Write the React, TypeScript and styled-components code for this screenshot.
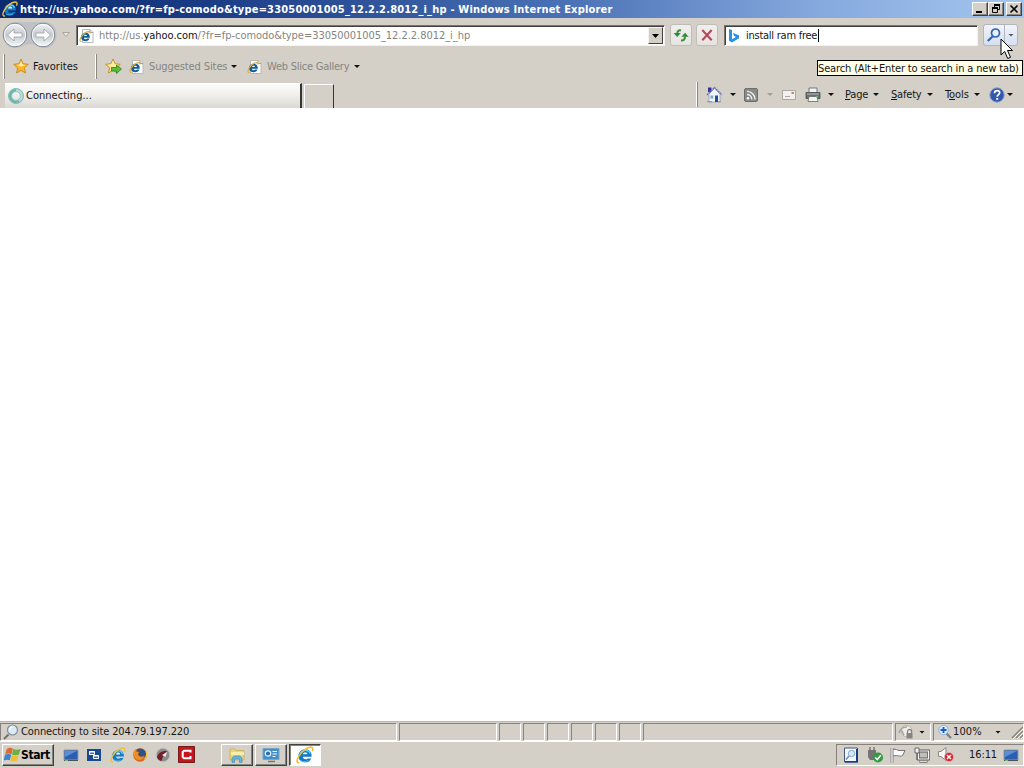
import type { ReactNode } from "react";
import styled, { createGlobalStyle, css } from "styled-components";

const GlobalStyle = createGlobalStyle`
  * {
    box-sizing: border-box;
  }

  body {
    margin: 0;
    overflow: hidden;
    background: #fff;
    font-family: "DejaVu Sans Condensed", "DejaVu Sans", sans-serif;
    font-stretch: condensed;
    font-size: 11px;
    color: #111;
  }

  svg {
    display: block;
    flex: none;
  }
`;

/* === small helpers === */

const Gap = styled.div<{ $w?: number }>`
  flex: ${({ $w }) => ($w === undefined ? "1 1 0" : `0 0 ${$w}px`)};
`;

const Label = styled.span<{ $w: number; $ls?: number; $muted?: boolean }>`
  flex: none;
  width: ${({ $w }) => $w}px;
  letter-spacing: ${({ $ls = -0.2 }) => $ls}px;
  color: ${({ $muted }) => ($muted ? "#858580" : "#151515")};
  white-space: pre;
  line-height: 14px;

  u {
    text-underline-offset: 1px;
  }

  b {
    font-weight: normal;
    color: #111;
  }
`;

const Caret = styled.i<{ $soft?: boolean }>`
  flex: none;
  width: 6px;
  height: 3px;
  background: ${({ $soft }) => ($soft ? "#a09e98" : "#111")};
  clip-path: polygon(0 0, 100% 0, 50% 100%);
`;

/* === window frame === */

const Screen = styled.div`
  display: flex;
  flex-direction: column;
  width: 1024px;
  height: 768px;
  background: #d4d0c8;
`;

const TitleBar = styled.header`
  display: flex;
  align-items: center;
  height: 18px;
  padding: 0 2px 0 2px;
  background: linear-gradient(90deg, #0c2a70 0%, #1a3c85 20%, #4a71b5 55%, #86a9de 80%, #a4c6ee 100%);
`;

const TitleText = styled.h1`
  flex: 1;
  margin: 0 0 0 2px;
  font-size: 11px;
  line-height: 17px;
  letter-spacing: 0.185px;
  color: #fff;
  white-space: pre;
`;

const WindowButton = styled.button`
  display: flex;
  align-items: center;
  justify-content: center;
  width: 16px;
  height: 14px;
  padding: 0;
  border: 1px solid;
  border-color: #fff #404040 #404040 #fff;
  background: #d4d0c8;
  box-shadow: inset -1px -1px #8a8780;

  &:last-child {
    margin-left: 2px;
  }
`;

/* === address row === */

const AddressRow = styled.div`
  display: flex;
  align-items: center;
  height: 34px;
  padding: 0 5px 0 2px;
`;

const field = css`
  display: flex;
  align-items: center;
  height: 21px;
  background: #fff;
  border: 1px solid;
  border-color: #77746e #f4f3ef #f4f3ef #77746e;
  box-shadow: inset 1px 1px #404040;
`;

const AddressField = styled.div`
  ${field}
  width: 589px;
  padding: 1px 1px 0 2px;
`;

const SearchField = styled.div`
  ${field}
  width: 254px;
  padding: 1px 0 0 3px;
`;

const TextCursor = styled.i`
  width: 1px;
  height: 13px;
  background: #000;
`;

const DropButton = styled.button`
  display: flex;
  align-items: center;
  justify-content: center;
  width: 15px;
  height: 17px;
  padding: 0;
  border: 1px solid;
  border-color: #f4f3ef #404040 #404040 #f4f3ef;
  background: #d4d0c8;
`;

const ToolButton = styled.button`
  display: flex;
  align-items: center;
  justify-content: center;
  width: 22px;
  height: 22px;
  padding: 0;
  border: 1px solid #c0bdb8;
  border-radius: 3px;
  background: linear-gradient(#f1efed, #e6e4e1);
`;

const SearchSplit = styled.div`
  display: flex;
  align-items: center;
  width: 35px;
  height: 22px;
  border: 1px solid #b0b5c2;
  border-radius: 3px;
  background: linear-gradient(#f2f4f9, #d5dff0);
  padding-left: 2px;

  &::after {
    content: "";
    order: 1;
    width: 1px;
    height: 20px;
    margin-left: 2px;
    background: #b0b5c2;
  }

  i {
    order: 2;
    margin-left: 3px;
    background: #4c5a70;
  }
`;

const Tooltip = styled.div`
  position: absolute;
  top: 60px;
  left: 817px;
  display: flex;
  align-items: center;
  width: 206px;
  height: 16px;
  padding-top: 1px;
  border: 1px solid #000;
  background: #fffee6;
`;

const Pointer = styled.svg`
  position: absolute;
  top: 38px;
  left: 1000px;
`;

/* === favorites row === */

const FavoritesRow = styled.div`
  display: flex;
  align-items: center;
  height: 29px;
  padding-left: 3px;
`;

const Grip = styled.i`
  flex: none;
  width: 2px;
  height: 25px;
  border-right: 1px solid #8b8882;
  background: #fff;
`;

/* === tabs and command bar === */

const TabRow = styled.div`
  display: flex;
  align-items: flex-end;
  height: 27px;
  padding-left: 5px;
`;

const Tab = styled.div`
  display: flex;
  align-items: center;
  width: 297px;
  height: 25px;
  padding: 0 0 0 3px;
  border-top: 1px solid #fff;
  border-right: 2px solid #353535;
  background: linear-gradient(#fcfcfa 0%, #f2f1ee 40%, #dcd9d3 100%);
`;

const NewTab = styled.div`
  width: 30px;
  height: 24px;
  margin-left: 2px;
  border: 1px solid #fff;
  border-right: 1px solid #353535;
  border-bottom: 0;
`;

const CommandBar = styled.div`
  display: flex;
  align-items: center;
  height: 27px;
  margin-left: auto;
  padding-right: 11px;
`;

const Page = styled.main`
  flex: 1;
  background: #fff;
`;

/* === status bar === */

const StatusBar = styled.div`
  display: flex;
  align-items: center;
  height: 20px;
  padding-top: 1px;
  gap: 2px;
  border-top: 1px solid #bab7b1;
`;

const StatusCell = styled.div<{ $w?: number }>`
  display: flex;
  align-items: center;
  flex: ${({ $w }) => ($w ? `0 0 ${$w}px` : "1 1 0")};
  height: 18px;
  border: 1px solid;
  border-color: #85827c #fff #fff #85827c;
`;

/* === taskbar === */

const TaskBar = styled.footer`
  display: flex;
  align-items: center;
  height: 27px;
  padding: 0 0 1px 2px;
  border-top: 1px solid #fff;
`;

const raised = css`
  border: 1px solid;
  border-color: #fff #404040 #404040 #fff;
  box-shadow: inset -1px -1px #86837d;
`;

const StartButton = styled.button`
  ${raised}
  display: flex;
  align-items: center;
  width: 52px;
  height: 22px;
  padding: 0 0 0 1px;
  background: #d4d0c8;
  font: bold 12px "DejaVu Sans Condensed", "DejaVu Sans", sans-serif;
  letter-spacing: -0.4px;
  color: #000;
`;

const TaskButton = styled.button<{ $active?: boolean }>`
  ${raised}
  display: flex;
  align-items: center;
  justify-content: center;
  width: 32px;
  height: 22px;
  margin-right: 2px;
  padding: 0;
  background: #d4d0c8;

  ${({ $active }) =>
    $active &&
    css`
      background: #fff;
      border-color: #404040 #fff #fff #404040;
      box-shadow: inset 1px 1px #86837d;
    `}
`;

const Tray = styled.div`
  display: flex;
  align-items: center;
  width: 188px;
  height: 22px;
  padding-left: 6px;
  border: 1px solid;
  border-color: #85827c #fff #fff #85827c;
`;

/* === icons === */

type IconProps = { w?: number; h?: number; box?: string; children: ReactNode };

const Icon = ({ w = 16, h = w, box = "0 0 16 16", children }: IconProps) => (
  <svg width={w} height={h} viewBox={box} fill="none">
    {children}
  </svg>
);

const IeMark = ({ size = 16 }: { size?: number }) => (
  <Icon w={size}>
    <path d="M13.500 11C12.500 13.200 10.700 14.500 8.300 14.500 4.700 14.500 2.200 12.100 2.200 8.800 2.200 5.400 4.900 2.900 8.200 2.900c3.600 0 5.900 2.500 5.700 6.700H6c.2 1.500 1.100 2.200 2.400 2.200.9 0 1.500-.3 1.900-.8z" fill="#1279c4" />
    <path d="M6.100 7.400C6.400 6.100 7.200 5.500 8.200 5.500s1.800.6 2 1.900z" fill="#e6f6ff" />
    <path d="M3.700 6.700C4.600 4.900 6.200 3.900 8.200 3.900c2.200 0 3.700 1 4.300 2.900" stroke="#6cccf2" strokeWidth="1.200" />
    <path d="M4 13c1.300 1 5 1.400 7-.2" stroke="#53bce9" strokeWidth=".8" />
    <path d="M3 14.800C.2 15.700.4 12.500 2.400 9.200 5 5 9.500 1.400 13 1c2.300-.2 2.400 1.700 1.500 3.700" stroke="#ecc03c" strokeWidth="1.400" />
  </Icon>
);

const IePage = () => (
  <Icon>
    <path d="M3.500 1.500h7.500l3 3v10h-10.500z" fill="#fff" stroke="#b7b8ba" />
    <path d="M11 1.500v3h3" fill="#dfe3e8" stroke="#a0a3a8" />
    <path d="M10.500 10.600c-.7 1.800-2 2.600-3.900 2.600-2.800 0-4.600-1.700-4.600-4.200s1.900-4.300 4.500-4.300c2.800 0 4.500 1.800 4.300 5H5c.1 1 .7 1.500 1.600 1.500.7 0 1.100-.2 1.400-.6z" fill="#125c99" />
    <path d="M5 8c.2-.9.8-1.300 1.500-1.300S7.800 7.100 8 8z" fill="#fff" />
    <path d="M3.200 7.500c.7-1.300 1.800-2 3.200-2" stroke="#3fb2de" strokeWidth="1.100" />
    <path d="M2.500 13.500C.3 14 .6 11.500 2.200 9 4 6.200 7.500 3.600 10 3.600c1.200.1 1.300 1 .9 2" stroke="#dcae3c" strokeWidth="1.100" />
  </Icon>
);

const Star = ({ add }: { add?: boolean }) => (
  <Icon w={17} h={17} box="0 0 17 17">
    <path d="M8 1l2.100 4.700 5.200.6-3.900 3.500 1.100 5.200L8 12.400 3.500 15l1.100-5.200L.7 6.300l5.200-.6z" fill={add ? "#f8e58c" : "#f9b52c"} stroke="#c78a22" strokeWidth=".9" />
    <path d="M8 3l1.400 3.500 3.600.4-4.800 1.700-5-1.700 3.500-.4z" fill="#fff0a8" />
    {add && <path d="M6.500 9.500h5V7l5 4-5 4.500V13h-5z" fill="#59bf35" stroke="#2e8425" strokeWidth=".8" />}
  </Icon>
);

const NavButtons = () => (
  <svg width="58" height="28" viewBox="0 0 58 28" fill="none">
    <defs>
      <linearGradient id="orb" x2="0" y2="1">
        <stop stopColor="#f1f3f5" />
        <stop offset=".5" stopColor="#c5cad0" />
        <stop offset="1" stopColor="#f7fbfc" />
      </linearGradient>
    </defs>
    <path d="M13 1h30c16 0 15 26 0 26-8 0-9-4-15-4s-8 4-15 4C-3 27-3 1 13 1z" fill="#bfc1c4" />
    {[13, 41].map((x) => (
      <g key={x}>
        <circle cx={x} cy="14" r="11.800" fill="url(#orb)" stroke="#858b92" />
        <circle cx={x} cy="14" r="10.600" stroke="#fff" strokeOpacity=".8" />
      </g>
    ))}
    <path d="M5.500 14l6.500-6v4h8v4h-8v4z" fill="#fff" stroke="#999fa6" strokeWidth=".8" />
    <path d="M48.500 14L42 8v4h-8v4h8v4z" fill="#fff" stroke="#999fa6" strokeWidth=".8" />
  </svg>
);

const Refresh = () => (
  <Icon>
    <path d="M8 3.500C5.500 2.800 4.200 4.200 4.200 7" stroke="#3c8f3c" strokeWidth="2" />
    <path d="M.6 6h7.200L4.200 10z" fill="#2e8b35" />
    <path d="M8 13.300c2.600.4 4-.8 4-3.800" stroke="#3c8f3c" strokeWidth="2" />
    <path d="M8.400 9.800h7.200L12 5.800z" fill="#2e8b35" />
  </Icon>
);

const Stop = () => (
  <Icon>
    <path d="M3.300 3l9.400 10.300M12.700 3L3.300 13.300" stroke="#b9475c" strokeWidth="2.100" />
  </Icon>
);

const Bing = () => (
  <Icon w={12} h={14} box="0 0 12 14">
    <path d="M1 0l3 1v9.200l4-2.300-1.900-.9L4.900 4 11 6.300v3L4 13.500 1 11.800z" fill="#2793e6" />
  </Icon>
);

const Lens = ({ color = "#2d62b8" }) => (
  <Icon>
    <path d="M6.500 9.500L1.800 14" stroke={color} strokeWidth="2.200" />
    <circle cx="9.500" cy="6" r="4" fill="#e6f1fc" stroke={color} strokeWidth="1.700" />
  </Icon>
);

const StatusLens = () => (
  <Icon>
    <path d="M5.500 10.500L1 15" stroke="#7b6d62" strokeWidth="2" />
    <circle cx="9.500" cy="6" r="5" fill="#dcebf3" stroke="#7f8f9b" strokeWidth="1.200" />
    <path d="M6.500 6a3 3 0 0 1 3-3" stroke="#fff" strokeWidth="1.200" />
  </Icon>
);

const ZoomIn = () => (
  <Icon>
    <path d="M9.500 9.500l4.500 4.500" stroke="#777f8d" strokeWidth="2.200" />
    <circle cx="6.500" cy="6" r="4.700" fill="#dceeff" stroke="#8db3de" />
    <path d="M6.500 3v6M3.500 6h6" stroke="#1f5bbb" strokeWidth="1.900" />
  </Icon>
);

const Spinner = () => (
  <Icon>
    <circle cx="8" cy="8" r="6" stroke="#b5dcd6" strokeWidth="3.400" />
    <path d="M8 2.200a5.800 5.800 0 1 0 3 10.700" stroke="#67b7ac" strokeWidth="2.200" />
    <circle cx="8" cy="8" r="7.500" stroke="#7fa9a4" strokeWidth=".8" />
    <circle cx="8" cy="8" r="4.300" stroke="#7fb8b0" strokeWidth=".6" />
  </Icon>
);

const House = () => (
  <Icon w={17} h={17} box="0 0 17 17">
    <path d="M2 1.500h3.500V6H2z" fill="#3732a4" />
    <path d="M3 8l5.500-5.500L14 8v8H3z" fill="#f0f4f9" stroke="#8293ac" strokeWidth=".7" />
    <path d="M1 9L8.500 1.500 16 9" stroke="#6d76b8" strokeWidth="1.400" strokeDasharray="2 .6" />
    <path d="M9 9.500h3V16H9z" fill="#264c98" />
    <path d="M4.500 9.500h2.700v3H4.500z" fill="#73a6d2" />
    <path d="M1 15.700h5M12.500 15.700H15" stroke="#7d9a86" />
  </Icon>
);

const Feed = () => (
  <Icon w={14} box="0 0 14 14">
    <rect x=".5" y=".5" width="13" height="13" rx="1.500" fill="#898989" stroke="#6d6d6d" />
    <circle cx="4" cy="10.300" r="1.300" fill="#fff" />
    <path d="M3 6.500a4.500 4.500 0 0 1 4.700 4.900M3 3.400a8 8 0 0 1 8 8" stroke="#f4f4f4" strokeWidth="1.400" />
  </Icon>
);

const Mail = () => (
  <Icon w={14} h={10} box="0 0 14 10">
    <path d="M.5.5h13v9H.5z" fill="#f2f1ee" stroke="#aaa8a4" />
    <path d="M9.500 2h2.500v2H9.500z" fill="#c18486" />
    <path d="M3 6.500h5" stroke="#aaa" />
  </Icon>
);

const Printer = () => (
  <Icon>
    <path d="M4 1h8v5H4z" fill="#f4f4f4" stroke="#777" />
    <path d="M1 5.500h14v6H1z" fill="#6c706f" stroke="#484b4b" strokeWidth=".8" />
    <path d="M2 7h12" stroke="#b5bab8" />
    <path d="M4 9.500h8l1 5H3z" fill="#f5f5f0" stroke="#666" strokeWidth=".8" />
    <path d="M11 9h2v1.500h-2z" fill="#6ab66c" />
  </Icon>
);

const Help = () => (
  <Icon>
    <circle cx="8" cy="8" r="7.200" fill="#3158ac" stroke="#8aa1c8" />
    <path d="M5.500 6.200C5.600 4.500 6.600 3.700 8.100 3.700c1.600 0 2.600.8 2.600 2.100 0 1.800-2.500 1.900-2.500 3.900" stroke="#fff" strokeWidth="1.700" />
    <path d="M7.200 11h2v1.800h-2z" fill="#fff" />
  </Icon>
);

const Flag = () => (
  <Icon w={17} h={17} box="0 0 16 16">
    <path d="M2.500 3C5 1.200 6.500 1.500 8.300 2.400L7 7.800C5.200 6.900 3.500 6.600 1 8z" fill="#e0692c" />
    <path d="M8.800 2.700c2 1 4.200 1.100 6.700.1L14 8c-2.200 1-4.400.9-6.500.1z" fill="#6caf43" />
    <path d="M.9 8.500c2.100-1.300 4.100-1.100 5.900-.2l-1.400 5.200C3.700 12.700 2 12.600-.4 13.800z" fill="#3f83cc" />
    <path d="M7.300 8.700c2.100.8 4.300.9 6.500-.1l-1.400 5c-2.200 1.100-4.500 1-6.500.1z" fill="#f0bd36" />
  </Icon>
);

const Desktop = () => (
  <Icon>
    <path d="M1 3h14v10H1z" fill="#2b5eb0" stroke="#8e9dab" />
    <path d="M2 4h12L2 10z" fill="#5a8fd6" />
    <path d="M1 13h14v1H1z" fill="#4b5155" />
    <path d="M2 13h3v1H2z" fill="#67c868" />
  </Icon>
);

const Switcher = () => (
  <Icon>
    <path d="M1 2h14v12H1z" fill="#17498f" />
    <path d="M3.500 4.500h5v3h-5z" fill="#3972b5" stroke="#fff" />
    <path d="M7.500 8.500h5v3h-5z" fill="#3972b5" stroke="#fff" />
    <path d="M3 5h6M7 9h6" stroke="#fff" />
  </Icon>
);

const Firefox = () => (
  <Icon>
    <circle cx="8" cy="8" r="6.800" fill="#dc641c" />
    <path d="M5 2.500C8 .5 13 2 14 6c.3 2-1 4-3 4.300C8 10.500 6 9 6.300 6.500L4 5z" fill="#315284" />
    <path d="M1.300 5.500C2 3.500 3 2.500 4 2l.3 2.500 3 .5-1.500 2c.5 3 4 3.500 6 1.500 0 3-2 4.500-4.500 4.500C4 13 1 10 1.300 5.500z" fill="#ef8d23" />
    <path d="M14 4.500c1.300 3 .5 6-1.500 8" stroke="#f7c23c" strokeWidth="1.200" />
  </Icon>
);

const Dragon = () => (
  <Icon>
    <circle cx="8" cy="8" r="6.700" fill="#8c8b8b" stroke="#bdbbb9" />
    <path d="M2 9.500C4 5 8 3.500 12.500 4c-3 1.500-2 4-4.500 5.500L6.500 14C4 13.500 2.300 12 2 9.500z" fill="#70202c" />
    <path d="M7 8l5-3-1.500 5z" fill="#f0e9e8" />
  </Icon>
);

const Comodo = () => (
  <Icon w={17} h={17} box="0 0 17 17">
    <path d="M.5.5h16v16H.5z" fill="#c5161d" stroke="#751a1c" />
    <path d="M12.500 6.500V4.800H6L4.700 6v5L6 12.200h6.500V10" stroke="#fff" strokeWidth="2" />
  </Icon>
);

const Folder = () => (
  <Icon w={18} h={18} box="0 0 18 18">
    <path d="M2 3h5l1 1.500h8V14H2z" fill="#e9d47a" stroke="#c5a950" strokeWidth=".7" />
    <path d="M3 6h13v3H3z" fill="#f9edac" />
    <path d="M4 16.500V12l2-2h6l2 2v4.500h-2.500V13h-5v3.500z" fill="#65b4d9" stroke="#4a91b5" strokeWidth=".7" />
  </Icon>
);

const ControlPanel = () => (
  <Icon w={18} h={18} box="0 0 18 18">
    <path d="M1 2.500h16v11H1z" fill="#438fc9" stroke="#76a6ca" />
    <circle cx="6" cy="7.500" r="2.700" fill="#2c6daf" stroke="#e4f3fb" strokeWidth="1.200" />
    <path d="M10.500 5.500h4.500M10.500 8h4.500M10.500 10.500h3" stroke="#f3f8fb" strokeWidth="1.200" />
    <path d="M6 15.500h7" stroke="#777" strokeWidth="1.500" />
  </Icon>
);

const TrayLens = () => (
  <Icon>
    <path d="M1.500 1h13v14h-13z" fill="#f3f7fc" stroke="#3e587e" />
    <path d="M13 2h2v13.500H2V14h11z" fill="#183f83" />
    <circle cx="8.500" cy="6.500" r="3.200" fill="#d3e7f8" stroke="#8ca9c2" />
    <path d="M6 9l-3 3.500" stroke="#7590ac" strokeWidth="1.600" />
  </Icon>
);

const UsbOk = () => (
  <Icon w={18} h={17} box="0 0 18 17">
    <path d="M4 1v3M8 1v3" stroke="#777" strokeWidth="1.500" />
    <path d="M2 4h8v7l-2 3H4l-2-3z" fill="#737373" />
    <circle cx="12" cy="11.500" r="5" fill="#329a40" />
    <path d="M9.300 11.500l2 2 3.500-4.200" stroke="#fff" strokeWidth="1.600" />
  </Icon>
);

const ActionFlag = () => (
  <Icon>
    <path d="M2 1v14.500" stroke="#777" strokeWidth="2.800" />
    <path d="M3 2.500c3-1 4.500 1 6 1h6l-2.200 4.700C10 10.500 8 7.500 3 9z" fill="#fafafa" stroke="#75736f" />
    <path d="M2 1v14.500" stroke="#fff" strokeWidth="1.200" />
  </Icon>
);

const Network = () => (
  <Icon>
    <path d="M4.500 4h10v8h-10z" fill="#bfbeb9" stroke="#5d5d5b" strokeWidth="2.800" />
    <path d="M4.500 4h10v8h-10z" stroke="#f9f9f9" strokeWidth="1.200" />
    <path d="M5.500 14.500h8" stroke="#5d5d5b" strokeWidth="2.400" />
    <path d="M6 14.300h7" stroke="#f9f9f9" />
    <path d="M1 1h4v5H1z" fill="#f4f4f4" stroke="#666" />
    <path d="M3 6v7" stroke="#6c6c6a" strokeWidth="1.500" />
  </Icon>
);

const Muted = () => (
  <Icon w={18} h={17} box="0 0 18 17">
    <path d="M1.500 5.500H4l5-4v13l-5-4H1.500z" fill="#f6f6f6" stroke="#8b8985" />
    <circle cx="12" cy="11" r="4.600" fill="#cf2b30" stroke="#f0c4c4" strokeWidth=".6" />
    <path d="M10 9l4 4M14 9l-4 4" stroke="#fff" strokeWidth="1.400" />
  </Icon>
);

const Protected = () => (
  <Icon>
    <circle cx="8.500" cy="7" r="5.500" fill="#efedea" stroke="#b7b4af" />
    <path d="M1 9c1-4 4-6 8-6M3 5l3 6" stroke="#aaa7a1" strokeWidth="1.500" />
    <path d="M9.500 9V7.500c0-2.700 4-2.700 4 0V9" stroke="#888580" strokeWidth="1.300" />
    <path d="M8.500 9h6v5.500h-6z" fill="#888580" />
  </Icon>
);

const ResizeGrip = () => (
  <Icon w={12} h={14} box="0 0 12 14">
    <path d="M2 14L13 3M6 14l7-7M10 14l3-3" stroke="#fff" strokeWidth="1" />
    <path d="M1 13L12 2M5 13l7-7M9 13l3-3" stroke="#85827c" strokeWidth="1.500" />
  </Icon>
);

export default function App() {
  return (
    <>
      <GlobalStyle />
      <Screen>
        <TitleBar>
          <IeMark />
          <TitleText>
            http://us.yahoo.com/?fr=fp-comodo&amp;type=33050001005_12.2.2.8012_i_hp - Windows Internet Explorer
          </TitleText>
          <WindowButton>
            <Icon w={12} h={10} box="0 0 12 10"><path d="M2 8h6" stroke="#000" strokeWidth="2" /></Icon>
          </WindowButton>
          <WindowButton>
            <Icon w={12} h={10} box="0 0 12 10">
              <path d="M4.500 3V1.500h5v4H8" stroke="#000" />
              <path d="M4 1h6M2 4h6" stroke="#000" strokeWidth="2" />
              <path d="M2.500 4.500h5v4h-5z" stroke="#000" />
            </Icon>
          </WindowButton>
          <WindowButton>
            <Icon w={12} h={10} box="0 0 12 10"><path d="M2.500 1.500l7 7M9.500 1.500l-7 7" stroke="#000" strokeWidth="1.600" /></Icon>
          </WindowButton>
        </TitleBar>

        <AddressRow>
          <NavButtons />
          <Gap $w={2} />
          <Icon w={8} h={6} box="0 0 8 6"><path d="M.5.5h7L4 4.500z" fill="#e8e6e1" stroke="#aaa7a0" /></Icon>
          <Gap $w={6} />
          <AddressField>
            <IePage />
            <Gap $w={4} />
            <Label $w={400} $ls={-0.04} $muted>
              http://us.<b>yahoo.com</b>/?fr=fp-comodo&amp;type=33050001005_12.2.2.8012_i_hp
            </Label>
            <Gap />
            <DropButton>
              <Icon w={7} h={4} box="0 0 7 4"><path d="M0 0h7L3.500 4z" fill="#000" /></Icon>
            </DropButton>
          </AddressField>
          <Gap $w={5} />
          <ToolButton><Refresh /></ToolButton>
          <Gap $w={4} />
          <ToolButton><Stop /></ToolButton>
          <Gap $w={6} />
          <SearchField>
            <Bing />
            <Gap $w={6} />
            <Label $w={72} $ls={-0.25}>install ram free</Label>
            <TextCursor />
          </SearchField>
          <Gap $w={5} />
          <SearchSplit>
            <Lens />
            <Caret />
          </SearchSplit>
        </AddressRow>

        <FavoritesRow>
          <Grip />
          <Gap $w={8} />
          <Star />
          <Gap $w={3} />
          <Label $w={62} $ls={0.05}>Favorites</Label>
          <Grip />
          <Gap $w={8} />
          <Star add />
          <Gap $w={7} />
          <IePage />
          <Gap $w={4} />
          <Label $w={82} $ls={-0.1} $muted>Suggested Sites</Label>
          <Caret />
          <Gap $w={10} />
          <IePage />
          <Gap $w={4} />
          <Label $w={87} $ls={-0.24} $muted>Web Slice Gallery</Label>
          <Caret />
        </FavoritesRow>

        <TabRow>
          <Tab>
            <Spinner />
            <Gap $w={2} />
            <Label $w={80} $ls={0.02}>Connecting...</Label>
          </Tab>
          <NewTab />
          <CommandBar>
            <Grip />
            <Gap $w={8} />
            <House />
            <Gap $w={7} />
            <Caret />
            <Gap $w={8} />
            <Feed />
            <Gap $w={9} />
            <Caret $soft />
            <Gap $w={9} />
            <Mail />
            <Gap $w={9} />
            <Printer />
            <Gap $w={7} />
            <Caret />
            <Gap $w={11} />
            <Label $w={28}><u>P</u>age</Label>
            <Caret />
            <Gap $w={12} />
            <Label $w={36}><u>S</u>afety</Label>
            <Caret />
            <Gap $w={12} />
            <Label $w={29} $ls={-0.1}>T<u>o</u>ols</Label>
            <Caret />
            <Gap $w={9} />
            <Help />
            <Gap $w={2} />
            <Caret />
          </CommandBar>
        </TabRow>

        <Page />

        <StatusBar>
          <StatusCell $w={397}>
            <Gap $w={2} />
            <StatusLens />
            <Gap $w={2} />
            <Label $w={180} $ls={-0.12}>Connecting to site 204.79.197.220</Label>
          </StatusCell>
          <StatusCell $w={98} />
          <StatusCell $w={22} />
          <StatusCell $w={22} />
          <StatusCell $w={22} />
          <StatusCell $w={22} />
          <StatusCell $w={22} />
          <StatusCell $w={22} />
          <StatusCell />
          <StatusCell $w={36}>
            <Gap $w={2} />
            <Protected />
            <Gap $w={5} />
            <Caret />
          </StatusCell>
          <StatusCell $w={91}>
            <Gap $w={3} />
            <ZoomIn />
            <Label $w={42} $ls={0.1}>100%</Label>
            <Caret />
            <Gap />
            <ResizeGrip />
          </StatusCell>
        </StatusBar>

        <TaskBar>
          <StartButton><Flag />Start</StartButton>
          <Gap $w={9} />
          <Desktop />
          <Gap $w={7} />
          <Switcher />
          <Gap $w={8} />
          <IeMark />
          <Gap $w={6} />
          <Firefox />
          <Gap $w={7} />
          <Dragon />
          <Gap $w={7} />
          <Comodo />
          <Gap $w={26} />
          <TaskButton><Folder /></TaskButton>
          <TaskButton><ControlPanel /></TaskButton>
          <TaskButton $active><IeMark size={18} /></TaskButton>
          <Gap />
          <Tray>
            <TrayLens />
            <Gap $w={7} />
            <UsbOk />
            <Gap $w={6} />
            <ActionFlag />
            <Gap $w={8} />
            <Network />
            <Gap $w={7} />
            <Muted />
            <Gap $w={14} />
            <Label $w={34} $ls={-0.1}>16:11</Label>
            <Desktop />
          </Tray>
        </TaskBar>
      </Screen>
      <Tooltip>
        <Label $w={202} $ls={-0.14}>Search (Alt+Enter to search in a new tab)</Label>
      </Tooltip>
      <Pointer width="14" height="22" viewBox="0 0 14 22">
        <path d="M1 1v16l3.700-3.500 3 7 2.800-1.200-3-6.800h5z" fill="#fff" stroke="#000" />
      </Pointer>
    </>
  );
}
